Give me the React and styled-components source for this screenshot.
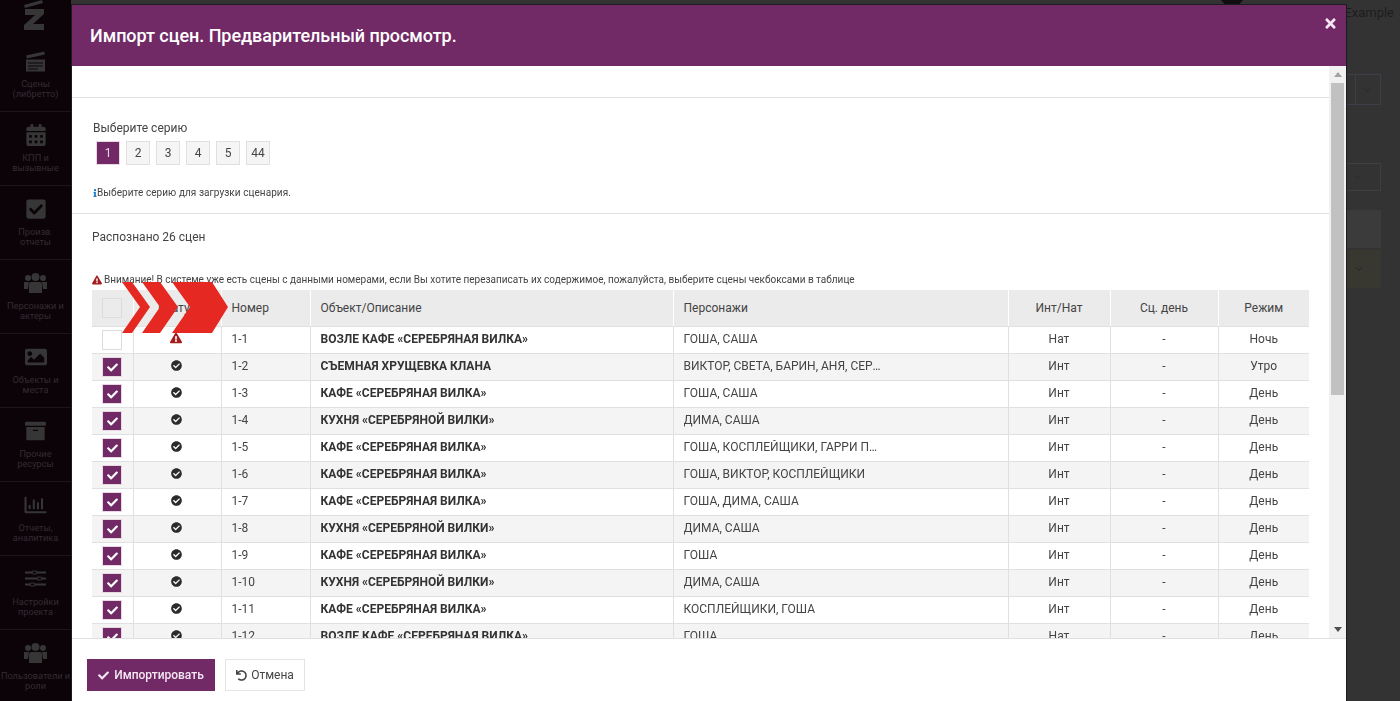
import styled, { createGlobalStyle } from 'styled-components';
import {
    FaArchive,
    FaCalendarAlt,
    FaCheck,
    FaCheckCircle,
    FaCheckSquare,
    FaExclamationTriangle,
    FaImage,
    FaInfo,
    FaRegChartBar,
    FaTimes,
    FaUndo,
} from 'react-icons/fa';
import { FiChevronDown } from 'react-icons/fi';

const Global = createGlobalStyle`
    html, body {
        margin: 0;
        height: 100%;
        overflow: hidden;
        background: #333;
        font-family: Roboto, "Liberation Sans", sans-serif;
    }
    * {
        box-sizing: border-box;
    }
`;

const LogoIcon = () => (
    <svg width='22' height='30' viewBox='0 0 22 30' fill='currentColor'>
        <path d='M1 5 L19 0 L20 3 L2 8 Z' />
        <path d='M2 9 H21 V14 L10 24 H21 V30 H1 V25 L12 15 H2 Z' />
    </svg>
);

const Clapper = () => (
    <svg width='21' height='21' viewBox='0 0 21 21' fill='currentColor'>
        <path d='M1 5 L19 1 L20 4 L2 8 Z' />
        <path d='M1 9 H20 V21 H1 Z M3 12 V13 H18 V12 Z M3 15 V16 H18 V15 Z M3 18 V19 H13 V18 Z' fillRule='evenodd' />
    </svg>
);

const Users = () => (
    <svg width='23' height='22' viewBox='0 0 23 22' fill='currentColor'>
        <circle cx='4' cy='6' r='3' />
        <circle cx='19' cy='6' r='3' />
        <circle cx='11.5' cy='5' r='4' />
        <path d='M0 10 H5 L4 17 H0 Z M23 10 H18 L19 17 H23 Z' />
        <path d='M7 10 H16 Q18 10 18 13 V21 H5 V13 Q5 10 7 10 Z' />
    </svg>
);

const Sliders = () => (
    <svg width='21' height='21' viewBox='0 0 21 21' fill='none' stroke='currentColor' strokeWidth='2'>
        <path d='M0 4 H7 M12 4 H21 M0 10 H12 M17 10 H21 M0 16 H5 M10 16 H21' />
        <rect x='7' y='2.5' width='5' height='3' rx='1.5' strokeWidth='1.2' />
        <rect x='12' y='8.5' width='5' height='3' rx='1.5' strokeWidth='1.2' />
        <rect x='5' y='14.5' width='5' height='3' rx='1.5' strokeWidth='1.2' />
    </svg>
);

const menu = [
    { icon: <Clapper />, label: ['Сцены', '(либретто)'] },
    { icon: <FaCalendarAlt size={22} />, label: ['КПП и', 'вызывные'] },
    { icon: <FaCheckSquare size={22} />, label: ['Произв.', 'отчеты'] },
    { icon: <Users />, label: ['Персонажи и', 'актеры'] },
    { icon: <FaImage size={22} />, label: ['Объекты и', 'места'] },
    { icon: <FaArchive size={21} />, label: ['Прочие', 'ресурсы'] },
    { icon: <FaRegChartBar size={23} />, label: ['Отчеты,', 'аналитика'] },
    { icon: <Sliders />, label: ['Настройки', 'проекта'] },
    { icon: <Users />, label: ['Пользователи и', 'роли'] },
];

const scenes = [
    ['ВОЗЛЕ КАФЕ «СЕРЕБРЯНАЯ ВИЛКА»', 'ГОША, САША', 'Нат', 'Ночь'],
    ['СЪЕМНАЯ ХРУЩЕВКА КЛАНА', 'ВИКТОР, СВЕТА, БАРИН, АНЯ, СЕРГЕЙ, КЛАН', 'Инт', 'Утро'],
    ['КАФЕ «СЕРЕБРЯНАЯ ВИЛКА»', 'ГОША, САША', 'Инт', 'День'],
    ['КУХНЯ «СЕРЕБРЯНОЙ ВИЛКИ»', 'ДИМА, САША', 'Инт', 'День'],
    ['КАФЕ «СЕРЕБРЯНАЯ ВИЛКА»', 'ГОША, КОСПЛЕЙЩИКИ, ГАРРИ ПОТТЕР, ДИМА', 'Инт', 'День'],
    ['КАФЕ «СЕРЕБРЯНАЯ ВИЛКА»', 'ГОША, ВИКТОР, КОСПЛЕЙЩИКИ', 'Инт', 'День'],
    ['КАФЕ «СЕРЕБРЯНАЯ ВИЛКА»', 'ГОША, ДИМА, САША', 'Инт', 'День'],
    ['КУХНЯ «СЕРЕБРЯНОЙ ВИЛКИ»', 'ДИМА, САША', 'Инт', 'День'],
    ['КАФЕ «СЕРЕБРЯНАЯ ВИЛКА»', 'ГОША', 'Инт', 'День'],
    ['КУХНЯ «СЕРЕБРЯНОЙ ВИЛКИ»', 'ДИМА, САША', 'Инт', 'День'],
    ['КАФЕ «СЕРЕБРЯНАЯ ВИЛКА»', 'КОСПЛЕЙЩИКИ, ГОША', 'Инт', 'День'],
    ['ВОЗЛЕ КАФЕ «СЕРЕБРЯНАЯ ВИЛКА»', 'ГОША', 'Нат', 'День'],
];
const series = ['1', '2', '3', '4', '5', '44'];

function App() {
    return (
        <>
            <Global />
            <Page>
                <Sidebar>
                    <Logo>
                        <LogoIcon />
                    </Logo>
                    {menu.map((item) => (
                        <MenuItem key={item.label[0]}>
                            {item.icon}
                            <MenuLabel>
                                {item.label[0]}
                                <br />
                                {item.label[1]}
                            </MenuLabel>
                        </MenuItem>
                    ))}
                </Sidebar>
                <Behind>
                    <Avatar />
                    <TopUser>Example</TopUser>
                    <GhostSelect $top={53} $split>
                        <FiChevronDown size={12} />
                    </GhostSelect>
                    <GhostSelect $top={58}>
                        <FiChevronDown size={12} />
                    </GhostSelect>
                    <GhostRow $top={19} />
                    <GhostRow $top={2} $olive>
                        <FiChevronDown size={12} />
                    </GhostRow>
                </Behind>
            </Page>
            <Modal>
                <ModalHeader>
                    <ModalTitle>Импорт сцен. Предварительный просмотр.</ModalTitle>
                    <CloseBtn>
                        <FaTimes size={15} />
                    </CloseBtn>
                </ModalHeader>
                <ModalMiddle>
                    <ModalBody>
                        <SeriesSection>
                            <SeriesLabel>Выберите серию</SeriesLabel>
                            <SeriesList>
                                {series.map((s, i) => (
                                    <SeriesBtn key={s} $active={i === 0}>
                                        {s}
                                    </SeriesBtn>
                                ))}
                            </SeriesList>
                            <Hint>
                                <FaInfo size={8} color='#1a7bc9' />
                                Выберите серию для загрузки сценария.
                            </Hint>
                        </SeriesSection>
                        <TableSection>
                            <Found>Распознано 26 сцен</Found>
                            <Warning>
                                <FaExclamationTriangle size={10} color='#a51d1d' />
                                Внимание! В системе уже есть сцены с данными номерами, если Вы хотите перезаписать их
                                содержимое, пожалуйста, выберите сцены чекбоксами в таблице
                            </Warning>
                            <TableWrap>
                                <Table>
                                    <colgroup>
                                        <col style={{ width: 41 }} />
                                        <col style={{ width: 88 }} />
                                        <col style={{ width: 89 }} />
                                        <col style={{ width: 363 }} />
                                        <col style={{ width: 335 }} />
                                        <col style={{ width: 102 }} />
                                        <col style={{ width: 108 }} />
                                        <col style={{ width: 91 }} />
                                    </colgroup>
                                    <thead>
                                        <tr>
                                            <Th $center>
                                                <CheckBox $header />
                                            </Th>
                                            <Th $center>Статус</Th>
                                            <Th>Номер</Th>
                                            <Th>Объект/Описание</Th>
                                            <Th>Персонажи</Th>
                                            <Th $center>Инт/Нат</Th>
                                            <Th $center>Сц. день</Th>
                                            <Th $center>Режим</Th>
                                        </tr>
                                    </thead>
                                    <tbody>
                                        {scenes.map((row, i) => (
                                            <Tr key={i}>
                                                <Td $center>
                                                    <CheckBox $checked={i > 0}>
                                                        {i > 0 && <FaCheck size={11} />}
                                                    </CheckBox>
                                                </Td>
                                                <Td $center>
                                                    {i === 0 ? (
                                                        <FaExclamationTriangle size={12} color='#a51d1d' />
                                                    ) : (
                                                        <FaCheckCircle size={11} color='#2b2b2b' />
                                                    )}
                                                </Td>
                                                <Td>1-{i + 1}</Td>
                                                <Td $bold>{row[0]}</Td>
                                                <Td>
                                                    <Chars>{row[1]}</Chars>
                                                </Td>
                                                <Td $center>{row[2]}</Td>
                                                <Td $center>-</Td>
                                                <Td $center>{row[3]}</Td>
                                            </Tr>
                                        ))}
                                    </tbody>
                                </Table>
                                <Arrows viewBox='0 0 106 51' width='106' height='51'>
                                    <path d='M0 0 H10 L28 25 L10 51 H0 L18 25 Z' />
                                    <path d='M20 0 H38 L56 25 L38 51 H20 L38 25 Z' />
                                    <path d='M50 0 H90 L106 25 L90 51 H50 L68 25 Z' />
                                </Arrows>
                            </TableWrap>
                        </TableSection>
                    </ModalBody>
                    <ScrollRail>
                        <ScrollArrow $up />
                        <ScrollThumb />
                        <ScrollArrow />
                    </ScrollRail>
                </ModalMiddle>
                <ModalFooter>
                    <PrimaryBtn>
                        <FaCheck size={11} />
                        Импортировать
                    </PrimaryBtn>
                    <CancelBtn>
                        <FaUndo size={11} />
                        Отмена
                    </CancelBtn>
                </ModalFooter>
            </Modal>
        </>
    );
}

const Page = styled.div`
    display: flex;
    height: 100vh;
`;
const Sidebar = styled.div`
    width: 71px;
    flex-shrink: 0;
    background: #0b0308;
    overflow: hidden;
`;
const Logo = styled.div`
    height: 38px;
    padding: 0 3px 8px 0;
    display: flex;
    align-items: flex-end;
    justify-content: center;
    color: #363636;
`;
const MenuItem = styled.div`
    height: 74px;
    padding-top: 12px;
    border-bottom: 1px solid #1c1519;
    display: flex;
    flex-direction: column;
    align-items: center;
    color: #363636;
    & > svg {
        height: 22px;
    }
`;
const MenuLabel = styled.div`
    margin-top: 7px;
    font-size: 9.2px;
    line-height: 10px;
    text-align: center;
    white-space: nowrap;
    color: #322c31;
`;
const Behind = styled.div`
    flex: 1;
    display: flex;
    flex-direction: column;
    align-items: flex-end;
    padding-right: 19px;
    position: relative;
`;
const Avatar = styled.div`
    position: absolute;
    top: -20px;
    right: 155px;
    width: 26px;
    height: 26px;
    border-radius: 50%;
    background: #120d10;
`;
const TopUser = styled.div`
    margin-top: 5px;
    height: 16px;
    font-size: 13px;
    line-height: 16px;
    color: #1f1c1f;
    margin-right: -13px;
`;
const GhostSelect = styled.div`
    position: relative;
    margin-top: ${(props) => props.$top}px;
    width: 50px;
    height: ${(props) => (props.$split ? 31 : 28)}px;
    border: 1px solid ${(props) => (props.$split ? '#3c3f4a' : '#3f3f3f')};
    display: flex;
    align-items: center;
    justify-content: flex-end;
    padding-right: ${(props) => (props.$split ? 7 : 17)}px;
    color: #2a2a30;
    &::before {
        content: '';
        display: ${(props) => (props.$split ? 'block' : 'none')};
        position: absolute;
        right: 24px;
        top: 0;
        bottom: 0;
        width: 1px;
        background: #3c3f4a;
    }
`;
const GhostRow = styled.div`
    margin-top: ${(props) => props.$top}px;
    width: 50px;
    height: 38px;
    background: ${(props) => (props.$olive ? '#383831' : '#3b3b3b')};
    display: flex;
    align-items: center;
    justify-content: flex-end;
    padding-right: 16px;
    color: #222;
`;
const Modal = styled.div`
    position: fixed;
    left: 72px;
    top: 5px;
    bottom: 0;
    width: 1274px;
    display: flex;
    flex-direction: column;
    background: #fff;
    color: #444;
    box-shadow: 0 0 0 1px #1c1c1c;
`;
const ModalHeader = styled.div`
    height: 61px;
    flex-shrink: 0;
    background: #722a66;
    display: flex;
    align-items: center;
    justify-content: space-between;
    padding: 0 8px 0 18px;
`;
const ModalTitle = styled.div`
    font-size: 18px;
    font-weight: 500;
    letter-spacing: -0.05px;
    color: #fff;
`;
const CloseBtn = styled.div`
    align-self: flex-start;
    margin-top: 11px;
    color: #f4e6f1;
`;
const ModalMiddle = styled.div`
    flex: 1;
    min-height: 0;
    display: flex;
`;
const ModalBody = styled.div`
    flex: 1;
    min-width: 0;
    overflow: hidden;
    padding-top: 31px;
`;
const ScrollRail = styled.div`
    width: 17px;
    flex-shrink: 0;
    background: #f1f1f1;
    display: flex;
    flex-direction: column;
    justify-content: space-between;
    align-items: center;
`;
const ScrollArrow = styled.div`
    height: 17px;
    flex-shrink: 0;
    display: flex;
    align-items: center;
    &::before {
        content: '';
        border-left: 4px solid transparent;
        border-right: 4px solid transparent;
        border-bottom: ${(props) => (props.$up ? '5px solid #a3a3a3' : '0')};
        border-top: ${(props) => (props.$up ? '0' : '5px solid #505050')};
    }
`;
const ScrollThumb = styled.div`
    width: 13px;
    height: 312px;
    background: #c1c1c1;
    margin-bottom: auto;
`;
const SeriesSection = styled.div`
    border-top: 1px solid #e0e0e0;
    border-bottom: 1px solid #e0e0e0;
    padding: 23px 21px 15px;
    height: 117px;
`;
const SeriesLabel = styled.div`
    font-size: 12px;
    line-height: 14px;
`;
const SeriesList = styled.div`
    display: flex;
    gap: 6px;
    margin: 6px 0 0 3px;
`;
const SeriesBtn = styled.div`
    width: 24px;
    height: 24px;
    display: flex;
    align-items: center;
    justify-content: center;
    font-size: 12px;
    background: ${(props) => (props.$active ? '#722a66' : '#f5f5f5')};
    color: ${(props) => (props.$active ? '#e8d8e4' : '#444')};
    border: 1px solid ${(props) => (props.$active ? '#e8d8e4' : '#e0e0e0')};
`;
const Hint = styled.div`
    margin-top: 22px;
    display: flex;
    align-items: center;
    font-size: 10px;
    line-height: 12px;
    letter-spacing: 0.06px;
    & > svg {
        margin: 0 -2px;
    }
`;
const TableSection = styled.div`
    padding: 16px 20px 0;
`;
const Found = styled.div`
    font-size: 12px;
    line-height: 14px;
`;
const Warning = styled.div`
    margin-top: 30px;
    display: flex;
    align-items: center;
    gap: 2px;
    font-size: 10px;
    line-height: 12px;
    white-space: nowrap;
`;
const TableWrap = styled.div`
    position: relative;
    margin-top: 4px;
`;
const Table = styled.table`
    width: 1217px;
    table-layout: fixed;
    border-collapse: collapse;
    font-size: 12px;
`;
const Th = styled.th`
    height: 36px;
    background: #ebebeb;
    font-weight: 400;
    padding: 0 10px;
    text-align: ${(props) => (props.$center ? 'center' : 'left')};
    border-left: 1px solid #fff;
    border-bottom: 1px solid #e0e0e0;
    &:first-child {
        border-left: 0;
    }
`;
const Tr = styled.tr`
    &:nth-child(even) td {
        background: #f4f4f4;
    }
`;
const Td = styled.td`
    height: 27px;
    padding: 0 10px 1px;
    text-align: ${(props) => (props.$center ? 'center' : 'left')};
    font-weight: ${(props) => (props.$bold ? 700 : 400)};
    color: ${(props) => (props.$bold ? '#333' : '#444')};
    border-bottom: 1px solid #e0e0e0;
    border-left: 1px solid #e0e0e0;
    vertical-align: middle;
    &:first-child {
        border-left: 0;
        padding: 1px 0 0;
    }
    & > svg {
        vertical-align: -1px;
        margin-left: -2px;
    }
`;
const CheckBox = styled.div`
    width: 20px;
    height: 20px;
    margin: 0 auto;
    display: flex;
    align-items: center;
    justify-content: center;
    color: #fff;
    background: ${(props) => (props.$checked ? '#722a66' : props.$header ? '#ebebeb' : '#fff')};
    border: 1px solid ${(props) => (props.$checked ? '#e8d8e4' : '#dcdcdc')};
`;
const Chars = styled.div`
    max-width: 200px;
    white-space: nowrap;
    overflow: hidden;
    text-overflow: ellipsis;
`;
const Arrows = styled.svg`
    position: absolute;
    left: 30px;
    top: -8px;
    fill: #e52822;
`;
const ModalFooter = styled.div`
    height: 63px;
    flex-shrink: 0;
    border-top: 1px solid #e0e0e0;
    padding: 20px 0 0 15px;
    display: flex;
    align-items: flex-start;
    gap: 10px;
`;
const PrimaryBtn = styled.div`
    width: 128px;
    height: 32px;
    background: #722a66;
    color: #f4e6f1;
    font-size: 12px;
    font-weight: 500;
    display: flex;
    align-items: center;
    justify-content: center;
    gap: 5px;
`;
const CancelBtn = styled.div`
    width: 80px;
    height: 32px;
    border: 1px solid #e4e4e4;
    color: #444;
    font-size: 12px;
    display: flex;
    align-items: center;
    justify-content: center;
    gap: 4px;
`;

export default App;
